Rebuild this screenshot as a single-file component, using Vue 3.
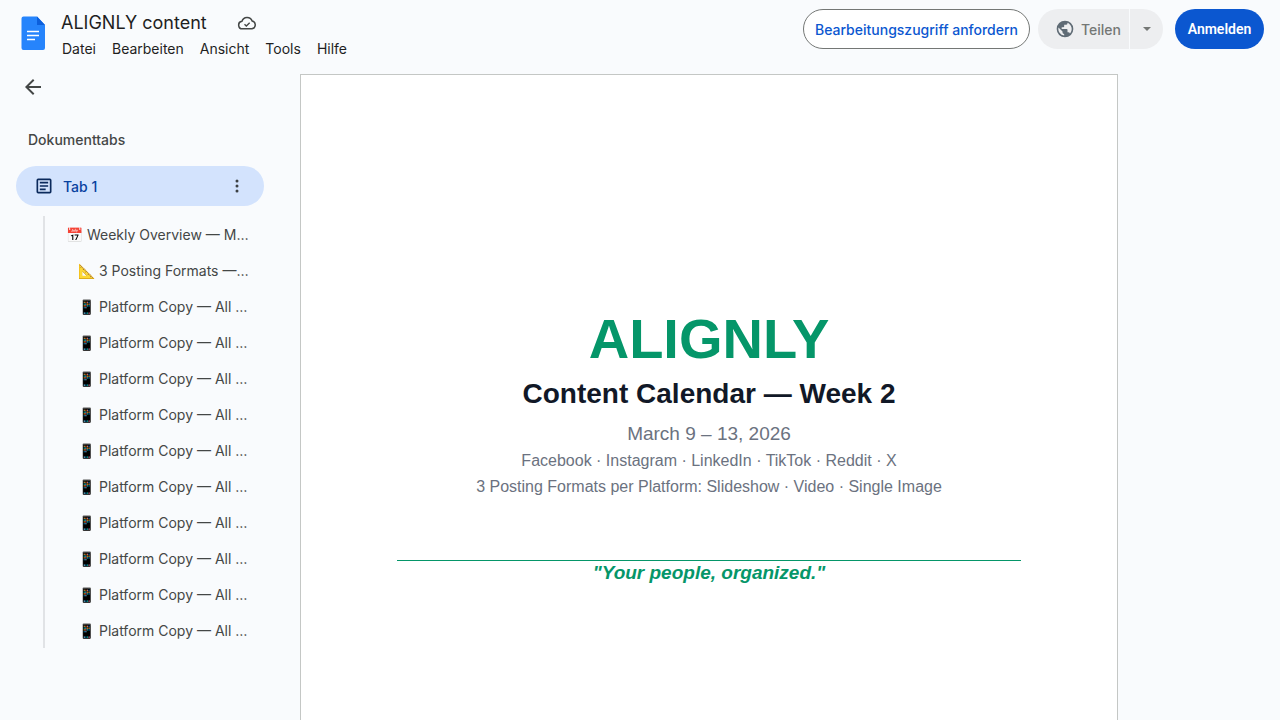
<script setup>
const items = [
  { icon: '📅', text: 'Weekly Overview — March 9–13', sub: false },
  { icon: '📐', text: '3 Posting Formats — Every Platform', sub: true },
  ...Array.from({ length: 10 }, () => ({ icon: '📱', text: 'Platform Copy — All 3 Formats', sub: true })),
]
const menus = ['Datei', 'Bearbeiten', 'Ansicht', 'Tools', 'Hilfe']
</script>

<template>
  <div class="app">
    <header class="topbar">
      <svg class="logo" width="28" height="36" viewBox="0 0 28 36">
        <path d="M2.5 2.5a2 2 0 0 1 2-2H18l8 8.5v23a2 2 0 0 1-2 2H4.500a2 2 0 0 1-2-2z" fill="#2684fc" transform="translate(0 1)"/>
        <path d="M18 1.500l8 8.500h-8z" fill="#0c5fdc"/>
        <path d="M8 16.500h12M8 20.500h12M8 24.500h8" stroke="#fff" stroke-width="1.500" fill="none"/>
      </svg>
      <div class="titles">
        <div class="title-row">
          <span class="doc-title">ALIGNLY content</span>
          <svg class="cloud" width="20" height="20" viewBox="0 0 24 24" fill="none" stroke="#444746" stroke-width="1.800">
            <path d="M6.500 19a4.500 4.500 0 0 1-.6-8.960A6.500 6.500 0 0 1 18.200 9.600 4.800 4.800 0 0 1 18 19z"/>
            <path d="M9 13.500l2.200 2.200 4-4" stroke-width="1.600"/>
          </svg>
        </div>
        <nav class="menus"><span v-for="m in menus" :key="m">{{ m }}</span></nav>
      </div>
      <div class="actions">
        <button class="request">Bearbeitungszugriff anfordern</button>
        <div class="share">
          <span class="share-main">
            <svg width="20" height="20" viewBox="0 0 24 24" fill="#5f6b75"><path d="M12 2a10 10 0 1 0 0 20 10 10 0 0 0 0-20zm-1 17.900A8 8 0 0 1 4.200 10.200L9 15v1a2 2 0 0 0 2 2zm6.900-2.500A2 2 0 0 0 16 16h-1v-3a1 1 0 0 0-1-1H8v-2h2a1 1 0 0 0 1-1V7h2a2 2 0 0 0 2-2v-.4a8 8 0 0 1 2.900 12.800z"/></svg>
            <span>Teilen</span>
          </span>
          <span class="share-caret"><i></i></span>
        </div>
        <button class="signin">Anmelden</button>
      </div>
    </header>

    <div class="body">
      <aside class="sidebar">
        <svg class="back" width="24" height="24" viewBox="0 0 24 24" fill="#444746"><path d="M20 11H7.800l5.600-5.600L12 4l-8 8 8 8 1.400-1.400L7.800 13H20z"/></svg>
        <div class="side-title">Dokumenttabs</div>
        <div class="tab">
          <svg width="20" height="20" viewBox="0 0 24 24" fill="#0b2a5c"><path d="M19 3H5a2 2 0 0 0-2 2v14a2 2 0 0 0 2 2h14a2 2 0 0 0 2-2V5a2 2 0 0 0-2-2zm0 16H5V5h14zM7 7h10v2H7zm0 4h10v2H7zm0 4h7v2H7z"/></svg>
          <span class="tab-name">Tab 1</span>
          <svg class="dots" width="20" height="20" viewBox="0 0 20 20" fill="#3c4043"><circle cx="10" cy="5" r="1.500"/><circle cx="10" cy="10" r="1.500"/><circle cx="10" cy="15" r="1.500"/></svg>
        </div>
        <ul class="outline">
          <li v-for="(it, i) in items" :key="i" :class="{ sub: it.sub }">
            <span class="line">{{ it.icon }} {{ it.text }}</span>
          </li>
        </ul>
      </aside>

      <main class="canvas">
        <article class="page">
          <h1>ALIGNLY</h1>
          <h2>Content Calendar — Week 2</h2>
          <p class="date">March 9 – 13, 2026</p>
          <p class="meta first">Facebook · Instagram · LinkedIn · TikTok · Reddit · X</p>
          <p class="meta">3 Posting Formats per Platform: Slideshow · Video · Single Image</p>
          <div class="rule"></div>
          <p class="slogan">"Your people, organized."</p>
        </article>
      </main>
    </div>
  </div>
</template>

<style>
html, body { margin: 0; background: #f9fbfd; overflow: hidden; }
</style>

<style scoped>
.app { width: 1280px; height: 720px; overflow: hidden; background: #f9fbfd; font-family: Inter, "Noto Sans", sans-serif; color: #1f1f1f; }
.topbar { height: 74px; box-sizing: border-box; display: flex; align-items: flex-start; padding: 14px 16px 0 19px; }
.logo { flex: none; margin-top: 1px; }
.titles { margin-left: 14px; margin-top: -1px; }
.title-row { display: flex; align-items: center; height: 20px; }
.doc-title { font-size: 18px; line-height: 20px; letter-spacing: 0; color: #1f1f1f; }
.cloud { margin-left: 30px; }
.menus { display: flex; gap: 16px; margin-top: 6px; margin-left: 1px; font-size: 14px; line-height: 20px; color: #1f1f1f; }
.actions { margin-left: auto; display: flex; align-items: center; margin-top: -5px; height: 40px; }
.request { height: 40px; box-sizing: border-box; width: 227px; border: 1px solid #747775; border-radius: 20px; background: #fff; color: #0b57d0; font: 500 14px Inter, sans-serif; padding: 0; white-space: nowrap; }
.share { display: flex; height: 40px; margin-left: 8px; color: #747775; font-size: 14px; font-weight: 500; }
.share-main { width: 91px; background: #edeef0; border-radius: 20px 0 0 20px; display: flex; align-items: center; gap: 6px; padding-left: 17px; box-sizing: border-box; }
.share-caret { width: 33px; margin-left: 1px; background: #edeef0; border-radius: 0 20px 20px 0; display: flex; align-items: center; justify-content: center; }
.share-caret i { border: 4px solid transparent; border-top-color: #747775; border-bottom: 0; }
.signin { width: 89px; height: 40px; margin-left: 12px; border: 0; padding: 0; border-radius: 20px; background: #0b57d0; color: #fff; font: 600 14px Roboto, sans-serif; }
.body { display: flex; height: 646px; }
.sidebar { width: 300px; flex: none; box-sizing: border-box; padding-left: 16px; }
.back { display: block; margin: 1px 0 0 5px; }
.side-title { margin: 31px 0 0 12px; font-size: 14px; line-height: 20px; font-weight: 500; color: #444746; }
.tab { width: 248px; height: 40px; margin-top: 16px; box-sizing: border-box; border-radius: 20px; background: #d3e3fd; display: flex; align-items: center; padding: 0 17px 0 18px; }
.tab-name { margin-left: 9px; font-size: 14px; font-weight: 500; color: #0842a0; }
.dots { margin-left: auto; }
.outline { list-style: none; margin: 10px 0 0 27px; padding: 0; width: 215px; border-left: 2px solid #e1e3e6; box-sizing: border-box; }
.outline li { height: 36px; display: flex; align-items: center; padding-left: 21px; font-size: 14px; color: #444746; }
.outline li.sub { padding-left: 33px; }
.line { display: block; overflow: hidden; white-space: nowrap; text-overflow: ellipsis; width: 100%; padding-right: 9px; box-sizing: border-box; }
.canvas { flex: 1; }
.page { width: 818px; height: 700px; box-sizing: border-box; border: 1px solid #c4c7c5; background: #fff; text-align: center; font-family: "Liberation Sans", Arial, sans-serif; padding: 232px 96px 0; }
.page h1 { margin: 0; font-size: 56px; line-height: 64px; font-weight: 700; color: #059669; }
.page h2 { margin: 5px 0 0; font-size: 28px; line-height: 36px; font-weight: 700; color: #111827; }
.date { margin: 9px 0 0; font-size: 19px; line-height: 26px; color: #6b7280; }
.meta { margin: 0; font-size: 16px; line-height: 26px; color: #6b7280; }
.meta.first { margin-top: 1px; }
.rule { border-top: 1px solid #059669; margin-top: 60px; }
.slogan { margin: 0; font-size: 19px; line-height: 24px; font-weight: 700; font-style: italic; color: #059669; }
</style>
